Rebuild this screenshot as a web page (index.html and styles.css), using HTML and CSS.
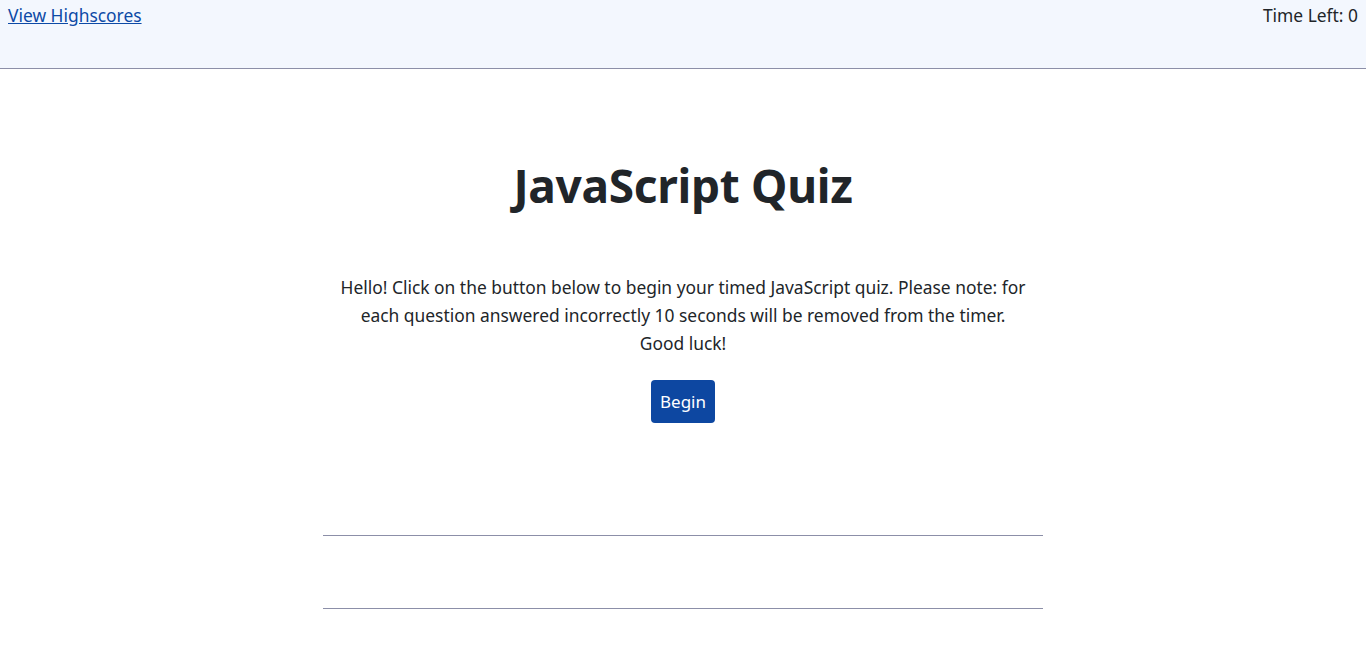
FILE: index.html
```html
<!DOCTYPE html>
<html lang="en">
<head>
<meta charset="utf-8">
<title>JavaScript Quiz</title>
<link rel="stylesheet" href="styles.css">
</head>
<body>
<header class="topbar">
  <a class="hs-link" href="#">View Highscores</a>
  <div class="timer">Time Left: <span>0</span></div>
</header>
<main class="quiz">
  <h1 class="title">JavaScript Quiz</h1>
  <p class="intro">Hello! Click on the button below to begin your timed JavaScript quiz. Please note: for each question answered incorrectly 10 seconds will be removed from the timer. Good luck!</p>
  <button class="begin" type="button">Begin</button>
  <div class="result"></div>
</main>
</body>
</html>
```
FILE: styles.css
```css
* { box-sizing: border-box; }
body {
  margin: 0;
  font-family: "Noto Sans", "Open Sans", sans-serif;
  color: #212529;
  background: #fff;
}
.topbar {
  display: flex;
  justify-content: space-between;
  align-items: flex-start;
  height: 69px;
  padding: 2px 8px 0;
  background: #f3f7fe;
  border-bottom: 1px solid #8c8fa8;
  font-size: 17.4px;
  line-height: 26px;
}
.hs-link {
  color: #0d4aa6;
  text-decoration: underline;
}
.timer { color: #212529; }
.quiz {
  width: 720px;
  margin: 0 auto;
  display: flex;
  flex-direction: column;
  align-items: center;
  text-align: center;
}
.title {
  margin: 80px 0 0;
  font-size: 46px;
  line-height: 72px;
  font-weight: 700;
  letter-spacing: -0.3px;
}
.intro {
  margin: 52px 0 0;
  padding: 0 15px;
  font-size: 17.4px;
  line-height: 28px;
}
.begin {
  margin-top: 23px;
  height: 43px;
  padding: 0 9px;
  font-family: inherit;
  font-size: 17px;
  color: #fff;
  background: #0d47a1;
  border: none;
  border-radius: 4px;
}
.result {
  width: 100%;
  height: 74px;
  margin-top: 112px;
  border-top: 1px solid #8c8fa8;
  border-bottom: 1px solid #8c8fa8;
}
```
